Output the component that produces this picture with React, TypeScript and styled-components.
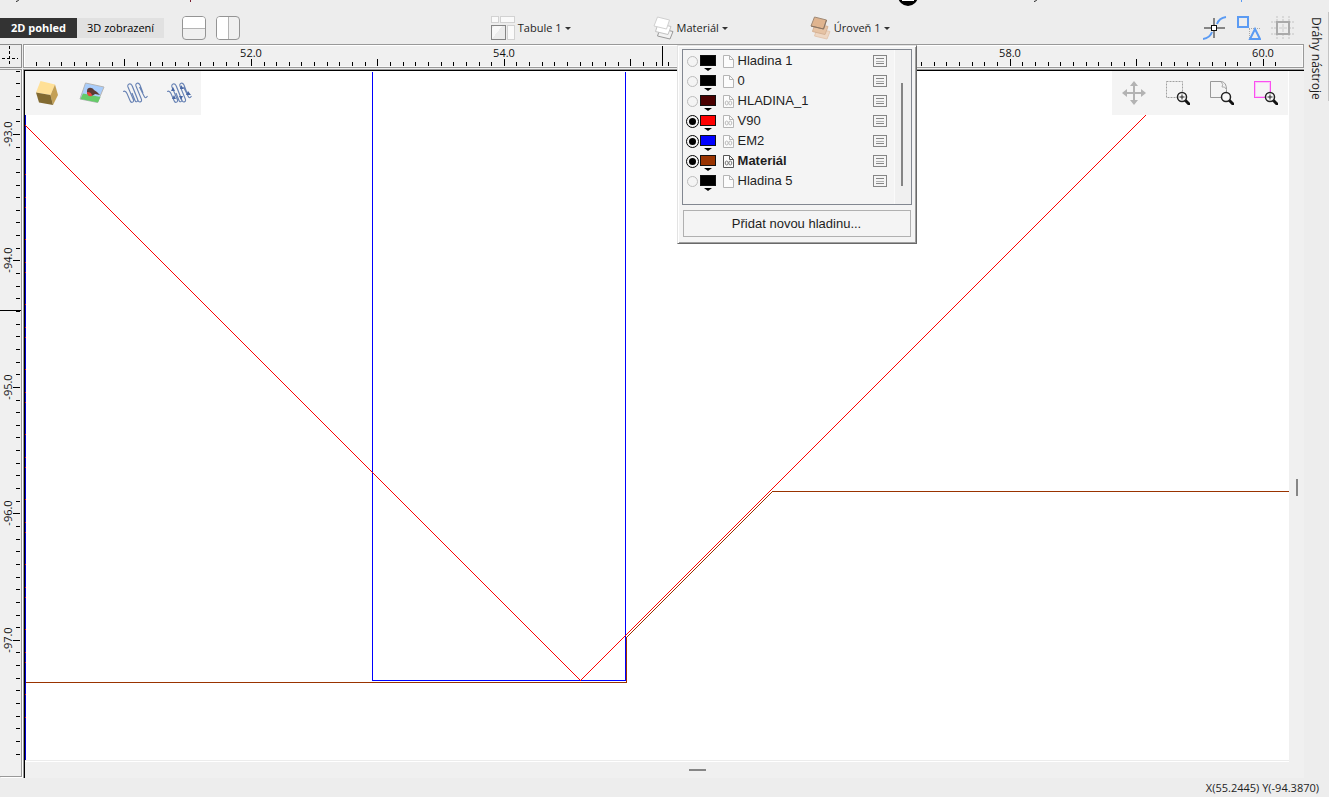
import React from "react";
import styled, { createGlobalStyle } from "styled-components";

const GlobalStyle = createGlobalStyle`
  * { box-sizing: border-box; }
  body {
    margin: 0;
    background: #ededed;
    color: #1e1e1e;
    font: 11px/16px "Open Sans", "Noto Sans", sans-serif;
    overflow: hidden;
  }
  button { font: inherit; color: inherit; cursor: pointer; }
  svg { display: block; }
`;

const Page = styled.div`
  display: flex;
  flex-direction: column;
  min-height: 100vh;
`;
const Body = styled.div`
  flex: 1;
  display: flex;
`;
const Main = styled.main`
  flex: 1;
  min-width: 0;
  display: flex;
  flex-direction: column;
`;
const MenuEdge = styled.div`
  height: 12px;
  overflow: hidden;
`;
const Toolbar = styled.header`
  display: flex;
  align-items: center;
  height: 32px;
`;
const ViewTab = styled.button<{ $active?: boolean }>`
  height: 20px;
  padding: 0 10px;
  border: 0;
  line-height: 18px;
  white-space: nowrap;
  width: ${(p) => (p.$active ? 77 : 87)}px;
  background: ${(p) => (p.$active ? "#333333" : "#e1e1e1")};
  color: ${(p) => (p.$active ? "#ffffff" : "#000000")};
  font-weight: ${(p) => (p.$active ? 700 : 400)};
`;
const SplitGroup = styled.div`
  display: flex;
  gap: 10px;
  padding-left: 18px;
`;
const SplitButton = styled.button<{ $vertical?: boolean }>`
  display: flex;
  flex-direction: ${(p) => (p.$vertical ? "row" : "column")};
  width: 24px;
  height: 24px;
  padding: 0;
  overflow: hidden;
  border: 1px solid #949494;
  border-radius: 4px;
  background: #f0f0f0;
  &::before {
    content: "";
    flex: 1;
    align-self: stretch;
    background: #fff;
  }
  &::after {
    content: "";
    flex: 1;
    align-self: stretch;
    border: solid #b4b4b4;
    border-width: ${(p) => (p.$vertical ? "0 0 0 1px" : "1px 0 0 0")};
  }
`;
const Spacer = styled.div<{ $grow: number }>`
  flex: ${(p) => p.$grow} 1 0;
`;
const Pickers = styled.div`
  display: flex;
  gap: 82px;
`;
const PickerWrap = styled.div`
  position: relative;
`;
const PickerButton = styled.button`
  display: flex;
  align-items: center;
  gap: 3px;
  height: 24px;
  padding: 0;
  border: 0;
  background: none;
  white-space: nowrap;
`;
const Caret = styled.span`
  border: solid transparent;
  border-width: 3px 3px 0;
  border-top-color: #333;
`;
const SnapGroup = styled.div`
  display: flex;
  gap: 10px;
  padding-right: 9px;
`;
const IconButton = styled.button`
  width: 24px;
  height: 24px;
  padding: 0;
  border: 0;
  background: none;
`;

const Workspace = styled.section`
  flex: 1;
  display: grid;
  grid-template-columns: 23px minmax(0, 1fr);
  grid-template-rows: 25px minmax(0, 1fr);
`;
const Corner = styled.div`
  margin-right: 1px;
  border: solid #8c8c8c;
  border-width: 1px 1px 1px 0;
  margin-bottom: 1px;
  overflow: hidden;
`;
const TopRuler = styled.div`
  margin-bottom: 1px;
  border: 1px solid #999;
  box-shadow: inset 1px 1px #fff, inset -1px -1px #f8f8f8;
  background: #f0f0f0;
  overflow: hidden;
`;
const SideRuler = styled.div`
  margin: 0 1px 1px 0;
  border: solid #999;
  border-width: 1px 1px 1px 0;
  background: #f0f0f0;
  box-shadow: 1px 1px #fff;
  overflow: hidden;
`;
const CanvasFrame = styled.div`
  display: grid;
  grid-template-columns: minmax(0, 1fr) 15px;
  grid-template-rows: minmax(0, 1fr) 16px;
  border: solid #000;
  border-width: 1px 0 0 1px;
  background: #f0f0f0;
`;
const CanvasEdge = styled.div`
  border: solid #999;
  border-width: 1px 0 0 1px;
  display: grid;
`;
const Canvas = styled.div`
  position: relative;
  background: #fff;
  border-bottom: 1px solid #fff;
  box-shadow: inset 0 -1px #ececec;
  overflow: hidden;
`;
const ToolStrip = styled.div<{ $side: "left" | "right" }>`
  position: absolute;
  top: 0;
  ${(p) => (p.$side === "left" ? "left: 0" : "right: 1px")};
  display: flex;
  gap: 20px;
  padding: 10px;
  background: #f4f4f4;
`;
const SideGrip = styled.div`
  display: flex;
  flex-direction: column;
  align-items: center;
`;
const BottomGrip = styled.div`
  grid-column: 1 / 3;
  display: flex;
  align-items: center;
`;
const Handle = styled.div<{ $vertical?: boolean }>`
  width: ${(p) => (p.$vertical ? 2 : 17)}px;
  height: ${(p) => (p.$vertical ? 17 : 2)}px;
  background: #868686;
`;
const StatusBar = styled.footer`
  height: 19px;
  padding: 2px 10px 0 0;
  text-align: right;
`;
const SidePanel = styled.aside`
  width: 25px;
  padding-top: 12px;
`;
const SideTab = styled.button`
  width: 25px;
  height: 89px;
  padding: 4px 0 0;
  border: 0;
  border-right: 1px solid #c4c4c4;
  background: none;
  writing-mode: vertical-rl;
  font-size: 12px;
  white-space: nowrap;
`;

const Popup = styled.div`
  position: absolute;
  z-index: 5;
  top: 29px;
  left: 24px;
  width: 240px;
  padding: 3px 4px 6px;
  border: 1px solid;
  border-color: #e3e3e3 #696969 #696969 #e3e3e3;
  box-shadow: inset 1px 1px #fff, inset -1px -1px #a0a0a0;
  background: #f4f4f4;
  font: 13px/20px "Liberation Sans", Arial, sans-serif;
`;
const LayerBox = styled.div`
  display: flex;
  height: 156px;
  border: 1px solid #828790;
`;
const LayerList = styled.ul`
  flex: 1;
  margin: 0;
  padding: 1px 0 0 3px;
  list-style: none;
`;
const LayerRow = styled.li<{ $current?: boolean }>`
  display: flex;
  align-items: center;
  height: 20px;
  font-weight: ${(p) => (p.$current ? 700 : 400)};
`;
const LayerToggle = styled.input`
  appearance: none;
  display: grid;
  place-items: center;
  width: 13px;
  height: 13px;
  margin: 0 2px 0 0;
  &::before {
    content: "";
    width: 9px;
    height: 9px;
    border: 1px solid #bcbcbc;
    border-radius: 50%;
  }
  &:checked {
    border: 1px solid #000;
    border-radius: 50%;
  }
  &:checked::before {
    width: 7px;
    height: 7px;
    border: 0;
    background: #000;
  }
`;
const Swatch = styled.button<{ $color: string }>`
  display: flex;
  flex-direction: column;
  align-items: center;
  gap: 2px;
  width: 14px;
  height: 16px;
  margin-top: 3px;
  padding: 0;
  border: 0;
  background: none;
  &::before {
    content: "";
    width: 14px;
    height: 11px;
    border: 1px solid #111;
    background: ${(p) => p.$color};
  }
  &::after {
    content: "";
    border: solid transparent;
    border-width: 3px 4px 0;
    border-top-color: #000;
  }
`;
const LayerName = styled.label`
  flex: 1;
  margin-left: 4px;
`;
const RowIcon = styled.span`
  margin-left: 8px;
`;
const RowMenu = styled.button`
  width: 14px;
  height: 12px;
  margin-right: 7px;
  padding: 0;
  border: 0;
  background: none;
`;
const ScrollTrack = styled.div`
  width: 17px;
  padding: 33px 0 18px 6px;
  background: #f0f0f0;
  border-left: 1px solid #fafafa;
`;
const ScrollThumb = styled.div`
  width: 2px;
  height: 100%;
  background: #858585;
`;
const AddButton = styled.button`
  display: block;
  width: 228px;
  height: 27px;
  margin: 5px 1px 0;
  padding: 0;
  border: 1px solid #b0b0b0;
  background: #f4f4f4;
`;

const layers = [
  { name: "Hladina 1", color: "#000000" },
  { name: "0", color: "#000000" },
  { name: "HLADINA_1", color: "#4a0000", linked: true },
  { name: "V90", color: "#ff0000", linked: true, on: true },
  { name: "EM2", color: "#0000ff", linked: true, on: true },
  { name: "Materiál", color: "#993300", linked: true, on: true, current: true },
  { name: "Hladina 5", color: "#000000" },
];

const SheetIcon = () => (
  <svg width="24" height="24" shapeRendering="crispEdges">
    <g fill="#fafafa" stroke="#d2d2d2">
      <rect x="0.5" y="0.5" width="7" height="6" />
      <rect x="9.5" y="0.5" width="14" height="6" />
      <rect x="16.5" y="9.5" width="7" height="14" />
    </g>
    <rect x="0.5" y="9.5" width="14" height="14" fill="#ececec" stroke="#858585" />
    <path d="M1 23V12l2-2h8Z" fill="#f8f8f8" />
  </svg>
);

const StackIcon = ({ tone }: { tone: "white" | "wood" }) => {
  const wood = tone === "wood";
  return (
    <svg width="21" height="24" strokeLinejoin="round">
      <path d="M7 12.500 20 15.500 17 23 4.500 20Z" fill={wood ? "#eed7c3" : "#f2f2f2"} stroke={wood ? "#e4c8b1" : "#999"} />
      <path d="M5 7.500 18 10.500 15 18.500 2.500 15.500Z" fill={wood ? "#e6c3a4" : "#fff"} stroke={wood ? "#d5b295" : "#c2c2c2"} />
      <path d="M4.500 1 16.500 4 13.500 13 1 10Z" fill={wood ? "#dfb48f" : "#fff"} stroke={wood ? "#a08a76" : "#d0d0d0"} />
      {wood && <path d="M1 10 13.500 13 16.500 4" fill="none" stroke="#8a7462" />}
    </svg>
  );
};

const SnapPointIcon = () => (
  <svg width="24" height="24" fill="none">
    <path d="M0 23Q7 22 9 16M14 8Q16 2 23 1" stroke="#5b9bf3" strokeWidth="2" />
    <path d="M11 2v7M11 15v7M1 12h7M14 12h8" stroke="#858585" strokeWidth="2" />
    <rect x="8.500" y="9.500" width="5" height="5" fill="#fff" stroke="#111" />
  </svg>
);
const SnapObjectIcon = () => (
  <svg width="24" height="24" fill="none">
    <rect x="0" y="1" width="10" height="10" stroke="#5b9bf3" strokeWidth="2" transform="translate(1 0)" />
    <path d="M12 12.500h12M12.500 13v10" stroke="#aaa" strokeDasharray="1 1" />
    <path d="M18 13 23 23H13Z" stroke="#5b9bf3" strokeWidth="2" />
  </svg>
);
const GridIcon = () => (
  <svg width="24" height="24" fill="none">
    <path d="M0 6h24M0 12h24M0 18h24M6 0v24M12 0v24M18 0v24" stroke="#d8d8d8" strokeWidth="2" strokeDasharray="2 1" />
    <rect x="6" y="6" width="12" height="12" fill="#eee" stroke="#aaa" strokeWidth="2" />
    <path d="M12 8v8M8 12h8" stroke="#ddd" strokeWidth="2" />
  </svg>
);

const CubeIcon = () => (
  <svg width="24" height="24">
    <path d="M5.500 0 20 3.500 15.500 14 1 11.500Z" fill="#ffe097" />
    <path d="M20 3.500 23 14 18 24 15.500 14Z" fill="#c4a055" />
    <path d="M1 11.500 15.500 14 18 24 4 21.500Z" fill="#826a31" />
  </svg>
);
const PictureIcon = () => (
  <svg width="26" height="24">
    <path d="M6.500 2 25 6 18.500 21.500 1 18Z" fill="#a9cdfb" stroke="#b5b5b5" />
    <path d="M4 12.500 21.500 16 19 21.500 1.500 18Z" fill="#66cb68" />
    <path d="M8 10c0-4 5-4 7-1l3 2 3 3-5-1c-3 3-7 2-8-1Z" fill="#5c3a34" />
    <path d="M8 11q5 0 5 4-5 1-5-4Z" fill="#e8443c" />
  </svg>
);
const PathIcon = ({ arrows }: { arrows?: boolean }) => (
  <svg width="25" height="24" fill="none" stroke="#6782b4">
    <path
      d="M0 10.500c2-1 3 0 4 2l3 7c1 3 4 2 3.500-0.500L5 6C4 3 7.500 1.500 9 4.500l6 15c1 2.500 4 1.500 3.500-1L13 5c-1-3 2.500-4 4-1l3 8M9 12l3 7.500c1 2.500 3.500 1 2.500-1.500L9.500 5.500M16.500 6l4.500 9c1 2 2 2.500 3.500 0"
      strokeWidth="1.100"
    />
    {arrows && (
      <path d="M5 18h4l-2-4ZM13 8h4l-3-4ZM19 14h5l-3-4ZM4 10h4l-2-4ZM12 15h4l-2 4Z" fill="#4867a5" stroke="none" />
    )}
  </svg>
);
const MoveIcon = () => (
  <svg width="24" height="24" fill="#b3b3b3">
    <path d="M11 4h2v7h7v2h-7v7h-2v-7H4v-2h7Z" />
    <path d="m12 0 4 5H8ZM12 24l4-5H8ZM0 12l5-4v8ZM24 12l-5-4v8Z" />
  </svg>
);
const Magnifier = ({ plus = true }: { plus?: boolean }) => (
  <g>
    <path d="m19 19 5 5" stroke="#111" strokeWidth="3" />
    <circle cx="16" cy="16" r="4.500" fill="#f8f8f8" stroke="#222" strokeWidth="1.500" />
    {plus && <path d="M16 13.500v5M13.500 16h5" stroke="#222" />}
  </g>
);
const ZoomAreaIcon = () => (
  <svg width="24" height="24">
    <rect x="0.500" y="0.500" width="16" height="16" fill="none" stroke="#a0a0a0" strokeDasharray="2 1" />
    <Magnifier />
  </svg>
);
const ZoomPageIcon = () => (
  <svg width="24" height="24">
    <path d="M0.500 0.500h11q5 1 5 8v8h-16Z" fill="#f4f4f4" stroke="#999" />
    <path d="M11 1q3 2 1 5 3-1 4 2" fill="#fff" stroke="#aaa" />
    <Magnifier plus={false} />
  </svg>
);
const ZoomSelectionIcon = () => (
  <svg width="24" height="24">
    <rect x="0.500" y="0.500" width="16" height="16" fill="none" stroke="#fa4ff0" />
    <rect x="1.500" y="1.500" width="14" height="14" fill="none" stroke="#fac4f6" />
    <Magnifier />
  </svg>
);

const FileIcon = ({ linked, strong }: { linked?: boolean; strong?: boolean }) => (
  <svg width="11" height="13" fill="none" stroke={strong ? "#555" : "#b5b5b5"}>
    <path d="M0.500 0.500h6l4 4v8h-10Z" fill="#fcfcfc" />
    <path d="M6.500 0.500v4h4" />
    {linked && (
      <g stroke={strong ? "#777" : "#bbb"}>
        <ellipse cx="3.700" cy="8" rx="1.500" ry="2" />
        <ellipse cx="7.300" cy="8" rx="1.500" ry="2" />
      </g>
    )}
  </svg>
);
const ListIcon = () => (
  <svg width="14" height="12" fill="none" stroke="#858585" shapeRendering="crispEdges">
    <rect x="0.500" y="0.500" width="13" height="11" />
    <path d="M3 3.500h8M3 8.500h8" />
    <path d="M3 6h8" stroke="#b0b0b0" />
  </svg>
);

const pitch = 12.647;

const TopScale = () => (
  <svg width="100%" height="22" shapeRendering="crispEdges">
    {Array.from({ length: 99 }, (_, i) => {
      const x = Math.floor(12.4 + i * pitch) + 0.5;
      const major = i % 10 === 7;
      return <path key={i} d={`M${x} ${major ? 14 : 17}V21`} stroke="#000" />;
    })}
    {[52, 54, 58, 60].map((v) => (
      <text key={v} x={227 + Math.round((v - 52) * pitch * 10)} y="12" textAnchor="middle" fill="#111">
        {v.toFixed(1)}
      </text>
    ))}
    <path d="M638.500 1V21" stroke="#000" />
  </svg>
);

const SideScale = () => (
  <svg width="21" height="700" shapeRendering="crispEdges">
    {Array.from({ length: 55 }, (_, i) => {
      const y = Math.floor(1.2 + i * pitch) + 0.5;
      return <path key={i} d={`M${i % 10 === 5 ? 13 : 16} ${y}H20`} stroke="#000" />;
    })}
    {[-93, -94, -95, -96, -97].map((v, i) => (
      <text
        key={v}
        transform={`translate(12 ${64 + Math.round(i * pitch * 10)}) rotate(-90)`}
        textAnchor="middle"
        fill="#111"
      >
        {v.toFixed(1)}
      </text>
    ))}
    <path d="M0 240.500H21" stroke="#000" />
  </svg>
);

const Drawing = () => (
  <svg width="100%" height="689" fill="none" shapeRendering="crispEdges">
    <g transform="translate(0.5 0.5)">
      <path d="M0 0V689" stroke="#0000d8" />
      <path d="M0 102V650" stroke="#e01030" strokeDasharray="1 22 1 9 1 31" />
      <path d="M0 611H601V566L747 420" stroke="#993300" />
      <line x1="747" y1="420" x2="100%" y2="420" stroke="#993300" />
      <path d="M347 0V609H600V0" stroke="#0000ff" />
      <path d="M0 54 555 609 1165 -1" stroke="#ff0000" />
    </g>
  </svg>
);

const LayerPopup = () => (
  <Popup>
    <LayerBox>
      <LayerList>
        {layers.map((l, i) => (
          <LayerRow key={l.name} $current={l.current}>
            <LayerToggle id={`layer-${i}`} type="checkbox" defaultChecked={l.on} />
            <Swatch $color={l.color} aria-label={`Barva ${l.name}`} />
            <RowIcon>
              <FileIcon linked={l.linked} strong={l.current} />
            </RowIcon>
            <LayerName htmlFor={`layer-${i}`}>{l.name}</LayerName>
            <RowMenu aria-label={`Vlastnosti ${l.name}`}>
              <ListIcon />
            </RowMenu>
          </LayerRow>
        ))}
      </LayerList>
      <ScrollTrack>
        <ScrollThumb />
      </ScrollTrack>
    </LayerBox>
    <AddButton>Přidat novou hladinu...</AddButton>
  </Popup>
);

export default function App() {
  return (
    <Page>
      <GlobalStyle />
      <Body>
        <Main>
          <MenuEdge>
            <svg width="100%" height="12">
              <path d="M16 1.500q2 0 3-2M1034 1.500q2 0 3-2" stroke="#222" fill="none" />
              <path d="M190.500 0v2" stroke="#7a2030" />
              <path d="M1241.500 0v2" stroke="#5b9bf3" />
              <circle cx="908" cy="-4" r="10" fill="#000" />
              <path d="M902 0h12v1h-12Z" fill="#fff" />
            </svg>
          </MenuEdge>
          <Toolbar>
            <ViewTab $active>2D pohled</ViewTab>
            <ViewTab>3D zobrazení</ViewTab>
            <SplitGroup>
              <SplitButton aria-label="Rozdělit vodorovně" />
              <SplitButton $vertical aria-label="Rozdělit svisle" />
            </SplitGroup>
            <Spacer $grow={4} />
            <Pickers>
              <PickerButton>
                <SheetIcon />
                Tabule 1
                <Caret />
              </PickerButton>
              <PickerWrap>
                <PickerButton aria-expanded="true">
                  <StackIcon tone="white" />
                  Materiál
                  <Caret />
                </PickerButton>
                <LayerPopup />
              </PickerWrap>
              <PickerButton>
                <StackIcon tone="wood" />
                Úroveň 1
                <Caret />
              </PickerButton>
            </Pickers>
            <Spacer $grow={5} />
            <SnapGroup>
              <IconButton aria-label="Přichytit k bodům"><SnapPointIcon /></IconButton>
              <IconButton aria-label="Přichytit k objektům"><SnapObjectIcon /></IconButton>
              <IconButton aria-label="Přichytit k mřížce"><GridIcon /></IconButton>
            </SnapGroup>
          </Toolbar>
          <Workspace>
            <Corner>
              <svg width="21" height="22" shapeRendering="crispEdges">
                <path d="M9.500 1v20" stroke="#000" strokeDasharray="3 2" />
                <path d="M2 13.500h16" stroke="#000" strokeDasharray="3 2" />
              </svg>
            </Corner>
            <TopRuler>
              <TopScale />
            </TopRuler>
            <SideRuler>
              <SideScale />
            </SideRuler>
            <CanvasEdge>
              <CanvasFrame>
                <Canvas>
                  <Drawing />
                  <ToolStrip $side="left">
                    <IconButton aria-label="Materiál"><CubeIcon /></IconButton>
                    <IconButton aria-label="Obrázky"><PictureIcon /></IconButton>
                    <IconButton aria-label="Dráhy"><PathIcon /></IconButton>
                    <IconButton aria-label="Směr drah"><PathIcon arrows /></IconButton>
                  </ToolStrip>
                  <ToolStrip $side="right">
                    <IconButton aria-label="Posun"><MoveIcon /></IconButton>
                    <IconButton aria-label="Zvětšit oblast"><ZoomAreaIcon /></IconButton>
                    <IconButton aria-label="Zobrazit stránku"><ZoomPageIcon /></IconButton>
                    <IconButton aria-label="Zobrazit výběr"><ZoomSelectionIcon /></IconButton>
                  </ToolStrip>
                </Canvas>
                <SideGrip>
                  <Spacer $grow={20} />
                  <Handle $vertical />
                  <Spacer $grow={13} />
                </SideGrip>
                <BottomGrip>
                  <Spacer $grow={10} />
                  <Handle />
                  <Spacer $grow={9} />
                </BottomGrip>
              </CanvasFrame>
            </CanvasEdge>
          </Workspace>
        </Main>
        <SidePanel>
          <SideTab>Dráhy nástroje</SideTab>
        </SidePanel>
      </Body>
      <StatusBar>X(55.2445) Y(-94.3870)</StatusBar>
    </Page>
  );
}
